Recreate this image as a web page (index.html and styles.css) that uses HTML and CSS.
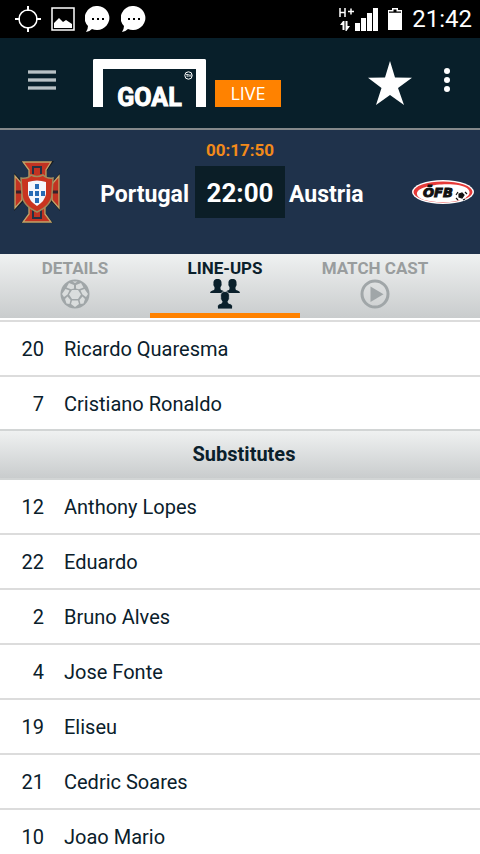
FILE: index.html
```html
<!DOCTYPE html>
<html lang="en">
<head>
<meta charset="utf-8">
<meta name="viewport" content="width=device-width, initial-scale=1">
<title>Goal Live</title>
<link rel="stylesheet" href="styles.css">
</head>
<body>
<div class="status">
  <div class="status-group notices">
    <svg width="26" height="26" viewBox="0 0 26 26" fill="none" stroke="#fff"><circle cx="13" cy="13" r="9" stroke-width="1.500"/><path d="M13 0v5M13 21v5M0 13h5M21 13h5" stroke-width="2"/></svg>
    <svg width="24" height="24" viewBox="0 0 24 24"><path d="M1 1h22v22H1z" fill="none" stroke="#fff" stroke-width="1.500"/><path d="M3 21v-5l5-5 4 4 3-2 6 4v4z" fill="#fff"/></svg>
    <svg width="26" height="27" viewBox="0 0 26 27"><path d="M13 0a12.500 12 0 1 1-6 23Q4 26 1 26Q3 23 3 20A12.500 12 0 0 1 13 0z" fill="#fff"/><path d="M7 12h2v2H7zM12 12h2v2h-2zM17 12h2v2h-2z" fill="#000"/></svg>
    <svg width="26" height="27" viewBox="0 0 26 27"><path d="M13 0a12.500 12 0 1 1-6 23Q4 26 1 26Q3 23 3 20A12.500 12 0 0 1 13 0z" fill="#fff"/><path d="M7 12h2v2H7zM12 12h2v2h-2zM17 12h2v2h-2z" fill="#000"/></svg>
  </div>
  <div class="status-group">
    <svg width="39" height="24" viewBox="0 0 39 24"><path d="M1 1v9M6 1v9M1 5.500h5M9 4.500h6M12 1.500v6" stroke="#fff" stroke-width="1.500" fill="none"/><path d="M1 18l3-4h1.500v9H3.500v-5zM6.500 14H8.500v5H11L7.500 24h-1zM16 16h5v8h-5zM22 11h5v13h-5zM28 6h5v18h-5zM34 1h5v23h-5z" fill="#fff"/></svg>
    <svg width="14" height="22" viewBox="0 0 14 22"><path d="M4 0h6v2h4v20H0V2h4z" fill="#fff"/><path d="M5.500 1.500h3v2H13v1.200H1V3.500h4.500z" fill="#000"/></svg>
    <span class="clock">21:42</span>
  </div>
</div>

<header class="app-bar">
  <button class="icon-button" aria-label="Menu"><svg width="28" height="22" viewBox="0 0 28 22"><path d="M0 3h28M0 11h28M0 19h28" stroke="#7d898f" stroke-width="4"/><path d="M0 3h28M0 11h28M0 19h28" stroke="#b8c1c5" stroke-width="2"/></svg></button>
  <a class="brand" href="#">
    <span class="goal">GOAL<svg class="mark" width="9" height="9" viewBox="0 0 9 9"><circle cx="4.500" cy="4.500" r="3.700" fill="none" stroke="#fff"/><path d="M2 3.500h2.500M3.200 3.500v2.500M5 6V3.500l1 1 1-1V6" fill="none" stroke="#fff" stroke-width=".8"/></svg></span>
    <span class="live">LIVE</span>
  </a>
  <div class="actions">
    <button class="icon-button" aria-label="Favourite"><svg width="44" height="44" viewBox="0 0 44 44"><path d="M22 0l5 16.500 17 .2-14 10.300 6 17-14-10-14 10 5.500-17L0 16.700l17-.2z" fill="#fff"/></svg></button>
    <button class="icon-button more" aria-label="More"><svg width="6" height="24" viewBox="0 0 6 24"><circle cx="3" cy="3" r="3" fill="#fff"/><circle cx="3" cy="12" r="3" fill="#fff"/><circle cx="3" cy="21" r="3" fill="#fff"/></svg></button>
  </div>
</header>

<section class="match">
  <div class="countdown">00:17:50</div>
  <div class="fixture">
    <div class="side home">
      <svg width="48" height="64" viewBox="0 0 48 64">
        <path d="M8 1h33l-7 10v8l6 2 7-8v38l-8-9-6 5v7l7 9H8l8-9v-7l-6-5-9 9V13l8 8 7-2v-8z" fill="#161c22"/>
        <path d="M10 2h28l-5 8v10h-17V10zM2 16l7 8v16l-7 8zM46 16l-7 8v16l7 8zM16 46h16v8l6 8H10l6-8z" fill="#c23322" stroke="#c1a56b" stroke-width="1.300"/>
        <path d="M20 14V7h8v7M20 50v8h8v-8" fill="none" stroke="#263143" stroke-width="2"/>
        <path d="M3 32h6M39 32h6" stroke="#35232b" stroke-width="3"/>
        <path d="M8 18q7 1 10-3 6 3 12 0 4 4 10 3l-1 16q0 11-15 18Q9 45 9 34z" fill="#c93420" stroke="#a08b5d" stroke-width="1.500"/>
        <path d="M15 22q9-3 18 0v12q-1 7-9 12-8-5-9-12z" fill="#f5f7fc"/>
        <path d="M22 24h4v5h-4zM22 31h4v5h-4zM22 38h4v5h-4zM16 31h4v5h-4zM28 31h4v5h-4z" fill="#286cb5"/>
      </svg>
      <span>Portugal</span>
    </div>
    <div class="kickoff">22:00</div>
    <div class="side away">
      <span>Austria</span>
      <svg width="62" height="24" viewBox="0 0 62 24"><ellipse cx="31" cy="12" rx="31" ry="12" fill="#fff"/><ellipse cx="31" cy="12" rx="29.500" ry="10.500" fill="#e63a38"/><path d="M5 13C7 4 47 1 56 9 63 17 45 23 30 22 15 22 4 19 5 13z" fill="#fff"/><text class="badge-text" x="11" y="17">ÖFB</text><circle cx="49" cy="16" r="5" fill="#fff"/><path d="M47 14l3-1 2 2-2 3-3-1zM44 15l2-3M53 12l2 2M44 18l2 2M51 20l2-1" fill="#111" stroke="#111" stroke-width="1.200"/></svg>
    </div>
  </div>
</section>

<nav class="tabs">
  <a class="tab" href="#"><span>DETAILS</span>
    <svg width="30" height="30" viewBox="0 0 30 30"><circle cx="15" cy="15" r="14.500" fill="#a0a6a8"/><path d="M12 11h6l3 4.500-3 4.500h-6l-3-4.500zM9 4l5 2v3.500l-3 .8-4.500-1.800zM21 4l-5 2v3.500l3 .8 4.500-1.800zM5.500 10l4 1.500-2 4L4 18l-2-3zM24.500 10l-4 1.500 2 4L26 18l2-3zM7.500 17.500l3 3.500-1 4-3-.5L5 20zM22.500 17.500l-3 3.500 1 4 3-.5L25 20zM12 21.500h6l1 3.500-4 3-4-3zM12.500 2.500h5L15 4z" fill="#dadddd"/></svg></a>
  <a class="tab active" href="#" aria-current="page"><span>LINE-UPS</span>
    <svg width="30" height="30" viewBox="0 0 30 30"><defs><path id="person" d="M7.500 0C10.700 0 11.800 2 11.500 4.500 12 6 11 7.500 10.500 8v2q0 1 2 1.500Q15 12 15 14H0Q0 12 2.500 11.500 4.500 11 4.500 10V8C4 7.500 3 6 3.500 4.500 3.200 2 4.300 0 7.500 0z"/></defs><g fill="#0a202b"><use href="#person"/><use href="#person" x="15"/><path d="M15 12.500c4 0 4.700 3 4.300 5.500.3 2-.6 3.500-1.300 4v1.500q.5 1 3 1.500 1.500.5 1.500 2.500v2.500h-15v-2.500q0-2 1.500-2.500 2.500-.5 3-1.500V22c-.7-.5-1.600-2-1.300-4-.4-2.500.3-5.500 4.300-5.500z" stroke="#d8dcdd" stroke-width=".8"/></g></svg></a>
  <a class="tab" href="#"><span>MATCH CAST</span>
    <svg width="30" height="30" viewBox="0 0 30 30"><circle cx="15" cy="15" r="13" fill="none" stroke="#a0a6a8" stroke-width="3"/><path d="M10.500 7.500v15.500L23.500 15.200z" fill="#a0a6a8"/></svg></a>
</nav>

<main class="lineup">
  <table class="players">
    <tbody>
      <tr><td class="number">20</td><td>Ricardo Quaresma</td></tr>
      <tr><td class="number">7</td><td>Cristiano Ronaldo</td></tr>
    </tbody>
  </table>
  <h2 class="heading">Substitutes</h2>
  <table class="players">
    <tbody>
      <tr><td class="number">12</td><td>Anthony Lopes</td></tr>
      <tr><td class="number">22</td><td>Eduardo</td></tr>
      <tr><td class="number">2</td><td>Bruno Alves</td></tr>
      <tr><td class="number">4</td><td>Jose Fonte</td></tr>
      <tr><td class="number">19</td><td>Eliseu</td></tr>
      <tr><td class="number">21</td><td>Cedric Soares</td></tr>
      <tr><td class="number">10</td><td>Joao Mario</td></tr>
    </tbody>
  </table>
</main>
</body>
</html>
```
FILE: styles.css
```css
* { box-sizing: border-box; }

html { height: 100%; }

body {
  display: flex;
  flex-direction: column;
  height: 100vh;
  margin: 0;
  overflow: hidden;
  background: #fff;
  color: #0a202b;
  font-family: Roboto, "Liberation Sans", sans-serif;
  font-size: 20px;
}

a { color: inherit; text-decoration: none; }
svg { display: block; flex: none; }

.status {
  display: flex;
  flex: none;
  align-items: center;
  justify-content: space-between;
  height: 38px;
  padding: 0 8px 0 15px;
  background: #000;
  color: #fff;
}

.status-group { display: flex; align-items: center; gap: 10px; }
.clock { font-size: 24px; line-height: 38px; }

.app-bar {
  display: flex;
  flex: none;
  align-items: center;
  height: 92px;
  padding: 0 30px 0 28px;
  border-bottom: 2px solid #84898b;
  background: #081f2a;
  color: #fff;
}

.icon-button {
  margin: 0;
  padding: 0;
  border: 0;
  background: none;
  cursor: pointer;
}

.app-bar > .icon-button { margin-bottom: 6px; }

.brand {
  display: flex;
  align-items: flex-end;
  gap: 9px;
  margin-left: 37px;
}

.goal {
  position: relative;
  width: 113px;
  height: 48px;
  padding-top: 14px;
  border: 10px solid #fff;
  border-bottom: 0;
  border-radius: 2px 2px 0 0;
  font-size: 25px;
  font-weight: 700;
  line-height: 30px;
  text-align: center;
  -webkit-text-stroke: 1px #fff;
}

.mark { position: absolute; top: 2px; right: 3px; }

.live {
  width: 66px;
  height: 27px;
  background: #ff8200;
  font-family: "Open Sans", sans-serif;
  font-size: 18px;
  line-height: 27px;
  text-align: center;
}

.actions {
  display: flex;
  align-items: center;
  gap: 32px;
  margin-left: auto;
}

.more { margin-bottom: 6px; }

.match {
  flex: none;
  height: 124px;
  padding-top: 10px;
  background: #1f324b;
  color: #fff;
}

.countdown {
  color: #f28a1a;
  font-size: 17px;
  font-weight: 700;
  line-height: 20px;
  text-align: center;
}

.fixture {
  display: grid;
  grid-template-columns: 1fr 90px 1fr;
  align-items: center;
  margin-top: 6px;
  font-size: 23px;
  font-weight: 700;
}

.side {
  display: flex;
  align-items: center;
  justify-content: space-between;
  height: 52px;
}

.side span { padding-top: 4px; }
.home { padding: 0 6px 0 13px; }
.away { padding: 0 6px 0 4px; }

.kickoff {
  height: 52px;
  background: #0b1e27;
  font-size: 26px;
  line-height: 54px;
  text-align: center;
}

.badge-text {
  fill: #111;
  font-family: "DejaVu Sans", sans-serif;
  font-size: 13px;
  font-style: italic;
  font-weight: 700;
  stroke: #111;
  stroke-width: 1px;
}

.tabs {
  display: flex;
  flex: none;
  height: 64px;
  background: linear-gradient(#eff1f1, #c9cccd);
}

.tab {
  display: flex;
  flex: 0 0 150px;
  flex-direction: column;
  align-items: center;
  padding-top: 4px;
  color: #999d9e;
  font-size: 17px;
  font-weight: 700;
  line-height: 21px;
}

.active {
  border-bottom: 5px solid #ff8200;
  color: #0a202b;
}

.lineup {
  flex: 1;
  min-height: 0;
  margin-top: 2px;
  border-top: 2px solid #dcdcdc;
  overflow: hidden;
}

.players {
  width: 100%;
  border-collapse: separate;
  border-spacing: 0;
}

.players td {
  height: 55px;
  padding: 0 0 0 20px;
  border-bottom: 2px solid #dcdcdc;
}

.players .number {
  width: 44px;
  padding: 0;
  text-align: right;
}

.heading {
  height: 51px;
  margin: -3px 0 0;
  padding-left: 8px;
  border: 2px solid #d2d5d5;
  border-width: 2px 0;
  background: linear-gradient(#eff1f1, #c9cccd);
  font-size: 20px;
  line-height: 46px;
  text-align: center;
}
```
